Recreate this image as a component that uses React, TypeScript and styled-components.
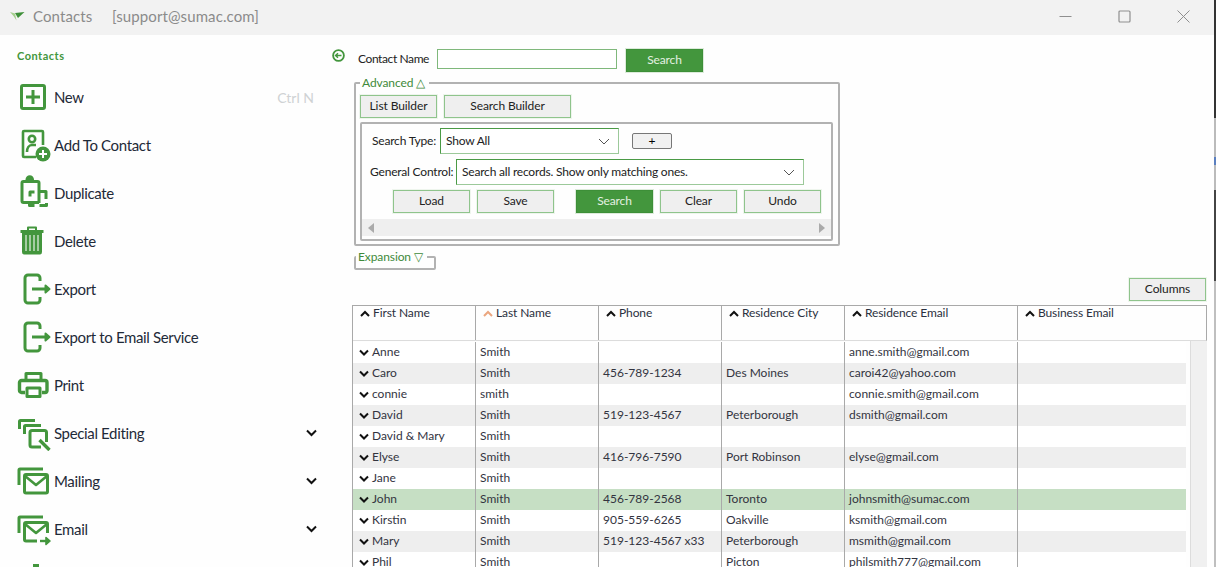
import { createGlobalStyle } from 'styled-components';
import styled from 'styled-components';
import type { ReactNode } from 'react';

const GREEN = '#43963d';

const Global = createGlobalStyle`
  html, body { margin: 0; padding: 0; height: 100%; background: #fefefe; }
  * { box-sizing: border-box; }
  body { font-family: "Lato", "Noto Sans", sans-serif; color: #222; }
`;

const Page = styled.div`
  height: 567px;
  width: 1216px;
  overflow: hidden;
  display: flex;
`;

const Window = styled.div`
  flex: 1;
  min-width: 0;
  display: flex;
  flex-direction: column;
`;

/* sliver of the desktop showing past the window edge */
const DesktopEdge = styled.div`
  flex: 0 0 2px;
  background: linear-gradient(
    #333 0 118px,
    #bbb 118px 157px,
    #5a7fc0 157px 165px,
    #bbb 165px 190px,
    #444 190px 281px,
    #bfbfbf 281px
  );
`;

/* title bar */
const TitleBar = styled.header`
  flex: 0 0 35px;
  background: #f2f2f2;
  display: flex;
  align-items: center;
  padding: 0 0 3px 10px;
  color: #8b8b8b;
  font-size: 15px;
  letter-spacing: 0.1px;
`;
const AppName = styled.span`
  margin-left: 8px;
  width: 79px;
`;
const WinControls = styled.div`
  margin-left: auto;
  display: flex;
  align-items: center;
  padding-right: 24px;
  gap: 46px;
`;

const Body = styled.div`
  flex: 1;
  min-height: 0;
  display: flex;
`;

/* left menu */
const Side = styled.nav`
  flex: 0 0 330px;
  padding-top: 15px;
`;
const SideTitle = styled.div`
  font-size: 11px;
  font-weight: 700;
  letter-spacing: 0.5px;
  color: ${GREEN};
  margin-left: 17px;
  height: 23px;
  line-height: 12px;
`;
const MenuRow = styled.div`
  height: 48px;
  padding-left: 17px;
  padding-right: 13px;
  display: flex;
  align-items: center;
  font-size: 15px;
  letter-spacing: -0.35px;
  color: #1f2a38;
  text-shadow: 0 -21px 0 rgba(0, 0, 0, 0.025);
`;
const MenuIcon = styled.svg`
  flex: 0 0 37px;
  width: 37px;
  height: 36px;
  fill: none;
  stroke: ${GREEN};
  stroke-width: 3;
  stroke-linejoin: round;
`;
const Shortcut = styled.span`
  margin-left: auto;
  margin-right: 3px;
  font-size: 14px;
  letter-spacing: 0;
  color: #cfd2d4;
  text-shadow: none;
`;
const Caret = styled.svg`
  margin-left: auto;
  width: 11px;
  height: 8px;
  fill: none;
  stroke: #111;
  stroke-width: 2;
`;

/* search area */
const Main = styled.main`
  flex: 1;
  min-width: 0;
  padding-top: 14px;
  padding-left: 2px;
  display: flex;
  flex-direction: column;
  font-size: 12px;
`;
const SearchRow = styled.div`
  display: flex;
  align-items: flex-start;
  height: 23px;
  margin-bottom: 4px;
`;
const BackIcon = styled.svg`
  width: 13px;
  height: 13px;
  margin-right: 13px;
  fill: none;
  stroke: ${GREEN};
  stroke-width: 1.8;
`;
const NameLabel = styled.label`
  width: 79px;
  line-height: 20px;
  letter-spacing: -0.4px;
`;
const NameInput = styled.input`
  width: 180px;
  height: 20px;
  border: 1px solid #7fb87b;
  background: #fff;
  margin: 0 9px 0 0;
  padding: 0 4px;
`;
const Btn = styled.button<{ $primary?: boolean; $w?: number }>`
  width: ${(p) => p.$w ?? 77}px;
  height: 23px;
  padding: 0 0 2px;
  font: inherit;
  letter-spacing: -0.1px;
  color: ${(p) => (p.$primary ? '#e4f1e2' : '#222')};
  background: ${(p) => (p.$primary ? GREEN : '#efefef')};
  border: 1px solid ${(p) => (p.$primary ? '#3d8f38' : '#8fc48c')};
  outline: 1px solid ${(p) => (p.$primary ? '#dcebda' : '#eef5ed')};
`;
const Fieldset = styled.fieldset<{ $w: number }>`
  width: ${(p) => p.$w}px;
  margin: 0 0 0 22px;
  padding: 5px 4px 3px;
  border: 2px solid #b2b2b2;
  border-radius: 2px;
  min-width: 0;
`;
const Legend = styled.legend`
  padding: 0 4px 0 2px;
  margin-left: 0;
  color: #3f8a3a;
  line-height: 14px;
  letter-spacing: -0.1px;
`;
const BuilderBar = styled.div`
  display: flex;
  gap: 7px;
  margin-bottom: 4px;
`;
const Inner = styled.div`
  width: 473px;
  height: 119px;
  border: 2px solid #b2b2b2;
  border-radius: 2px;
  padding-top: 4px;
`;
const ControlRow = styled.div<{ $left: number }>`
  display: flex;
  align-items: center;
  padding-left: ${(p) => p.$left}px;
  margin-bottom: 5px;
  letter-spacing: -0.2px;
  white-space: nowrap;
`;
const RowLabel = styled.label<{ $w: number }>`
  width: ${(p) => p.$w}px;
  padding-bottom: 2px;
`;
const Combo = styled.div<{ $w: number }>`
  width: ${(p) => p.$w}px;
  height: 26px;
  padding: 0 8px 2px 5px;
  display: flex;
  align-items: center;
  justify-content: space-between;
  background: #fff;
  border: 1px solid #9cc99a;
  border-left-color: #4a9a45;
  border-top-color: #4a9a45;
`;
const ComboCaret = styled.svg`
  width: 12px;
  height: 7px;
  margin-top: 2px;
  fill: none;
  stroke: #555;
  stroke-width: 1;
`;
const PlusBtn = styled.button`
  width: 40px;
  height: 16px;
  margin-left: 13px;
  padding: 0;
  font: inherit;
  line-height: 12px;
  background: #f1f1f1;
  border: 1px solid #777;
  border-radius: 2px;
`;
const ActionRow = styled.div`
  display: flex;
  gap: 7px;
  padding-left: 31px;
  margin-top: 2px;
`;
const ActionGap = styled.div`
  width: 8px;
`;
const HScroll = styled.div`
  margin-top: 6px;
  height: 17px;
  background: #efefef;
  display: flex;
  align-items: center;
  justify-content: space-between;
  padding: 0 6px;
`;
const Tri = styled.span<{ $dir: 'l' | 'r' }>`
  width: 0;
  height: 0;
  border-top: 5px solid transparent;
  border-bottom: 5px solid transparent;
  ${(p) => (p.$dir === 'l' ? 'border-right: 6px solid #aaa;' : 'border-left: 6px solid #aaa;')}
`;
const ExpansionSet = styled(Fieldset)`
  margin-top: 4px;
  height: 20px;
  padding: 0;
`;
const ColumnsRow = styled.div`
  display: flex;
  justify-content: flex-end;
  padding-right: 8px;
  margin-top: 8px;
  margin-bottom: 4px;
`;

/* table */
const GridTable = styled.div`
  flex: 1;
  min-height: 0;
  width: 855px;
  margin-left: 20px;
  border-left: 1px solid #a9a9a9;
  display: flex;
  flex-direction: column;
  overflow: hidden;
`;
const HeadRow = styled.div`
  flex: 0 0 36px;
  display: grid;
  grid-template-columns: 123px 123px 123px 123px 173px 1fr;
  border-top: 1px solid #a9a9a9;
  border-right: 1px solid #a9a9a9;
  border-bottom: 1px solid #dcdcdc;
`;
const HeadCell = styled.div`
  padding: 0 0 0 7px;
  display: flex;
  align-items: flex-start;
  gap: 3px;
  line-height: 13px;
  color: #2b3040;
  letter-spacing: -0.1px;
  border-right: 1px solid #a9a9a9;
  &:last-child { border-right: 0; }
`;
const SortIcon = styled.svg<{ $active?: boolean }>`
  width: 10px;
  height: 7px;
  margin-top: 4px;
  fill: none;
  stroke: ${(p) => (p.$active ? '#eba67f' : '#111')};
  stroke-width: 2;
`;
const BodyWrap = styled.div`
  flex: 1;
  min-height: 0;
  display: flex;
  padding-top: 1px;
`;
const Rows = styled.div`
  flex: 0 0 833px;
`;
const Row = styled.div<{ $tone: 'plain' | 'alt' | 'sel' }>`
  height: 21px;
  display: grid;
  grid-template-columns: 123px 123px 123px 123px 173px 1fr;
  background: ${(p) => (p.$tone === 'sel' ? '#c6dfc4' : p.$tone === 'alt' ? '#eeeeee' : '#fff')};
`;
const Cell = styled.div`
  padding-left: 4px;
  padding-bottom: 2px;
  line-height: 19px;
  white-space: nowrap;
  color: #33343f;
  border-right: 1px solid #a9a9a9;
  &:last-child { border-right: 0; }
`;
const FirstCell = styled(Cell)`
  padding-left: 6px;
  display: flex;
  align-items: center;
  gap: 3px;
`;
const RowCaret = styled.svg`
  width: 10px;
  height: 7px;
  margin-top: 2px;
  fill: none;
  stroke: #111;
  stroke-width: 2;
`;
const VTrack = styled.div`
  flex: 0 0 17px;
  margin-left: 4px;
  margin-top: -1px;
  background: #f0f0f0;
  border-left: 1px solid #dcdcdc;
`;

const up = <path d="M1 6 L5 2 L9 6" />;
const down = <path d="M1 1.5 L5 5.5 L9 1.5" />;

type Item = { label: string; icon: ReactNode; shortcut?: string };

const exportIcon = (
  <>
    <path d="M23 10 V7 a3 3 0 0 0 -3 -3 H11 a3 3 0 0 0 -3 3 V29 a3 3 0 0 0 3 3 H20 a3 3 0 0 0 3 -3 V26" />
    <path d="M15 18 H29" />
    <path d="M28.5 14.5 L32.5 18 L28.5 21.5 Z" fill={GREEN} strokeWidth="2" />
  </>
);

const menu: Item[] = [
  {
    label: 'New',
    shortcut: 'Ctrl N',
    icon: (
      <>
        <rect x="4.5" y="6.5" width="23" height="23" rx="1.5" />
        <path d="M16 11 V25 M9 18 H23" />
      </>
    ),
  },
  {
    label: 'Add To Contact',
    icon: (
      <>
        <path d="M19 30 H7 a1 1 0 0 1 -1 -1 V5 a1 1 0 0 1 1 -1 H25 a1 1 0 0 1 1 1 V18" strokeWidth="2.6" />
        <circle cx="15" cy="12" r="3.2" strokeWidth="2.6" />
        <path d="M10 25 c0 -4 2 -7 5 -7 h4" strokeWidth="2.6" />
        <circle cx="26" cy="27" r="7.5" fill={GREEN} stroke="none" />
        <path d="M26 23 V31 M22 27 H30" stroke="#fff" strokeWidth="2" />
      </>
    ),
  },
  {
    label: 'Duplicate',
    icon: (
      <>
        <path d="M22 28 V8 a1.5 1.5 0 0 0 -1.5 -1.5 H6.5 A1.5 1.5 0 0 0 5 8 V26 a1.5 1.5 0 0 0 1.5 1.5 H22" />
        <path d="M9.5 6 V4.5 a3 3 0 0 1 6.5 0 V6" fill={GREEN} strokeWidth="2" />
        <path d="M13 21.5 V17 H17.5" />
        <path d="M22 16.5 H29 V24" />
        <path d="M12.5 27 V30.5 H17.5 M22.5 30.5 H29.5 V28" />
      </>
    ),
  },
  {
    label: 'Delete',
    icon: (
      <>
        <path d="M3.5 8.5 H26.5" />
        <path d="M11 7 V4.5 H19 V7" strokeWidth="2" />
        <path d="M5.5 9 H24.5 V29.5 a1.5 1.5 0 0 1 -1.5 1.5 H7 A1.5 1.5 0 0 1 5.5 29.5 Z" fill={GREEN} stroke={GREEN} strokeWidth="1" />
        <path d="M9 12 V28 M13 12 V28 M17 12 V28 M21 12 V28" stroke="#cfe3cd" strokeWidth="1.4" />
      </>
    ),
  },
  { label: 'Export', icon: exportIcon },
  { label: 'Export to Email Service', icon: exportIcon },
  {
    label: 'Print',
    icon: (
      <>
        <path d="M9 13 V6.5 H24 V13" />
        <path d="M8 25.5 H4.5 a2 2 0 0 1 -2 -2 V15.5 a2 2 0 0 1 2 -2 H28 a2 2 0 0 1 2 2 V23.5 a2 2 0 0 1 -2 2 H25" strokeWidth="3.4" />
        <path d="M10 21 H23 V29.5 H10 Z" />
        <circle cx="26.5" cy="17.5" r="1.5" fill="#fff" stroke="none" />
      </>
    ),
  },
  {
    label: 'Special Editing',
    icon: (
      <>
        <path d="M2.5 14 V6.5 a1 1 0 0 1 1 -1 H18" />
        <path d="M7.5 19 V11.5 a1 1 0 0 1 1 -1 H24" />
        <path d="M24 32 H15 a2 2 0 0 1 -2 -2 V17.5 a2 2 0 0 1 2 -2 H27.5 a2 2 0 0 1 2 2 V27" />
        <path d="M22.5 25 L32.5 35" strokeWidth="3.4" />
      </>
    ),
  },
  {
    label: 'Mailing',
    icon: (
      <>
        <path d="M2 22 V7 a1 1 0 0 1 1 -1 H26" />
        <rect x="7.5" y="11.5" width="23" height="18.5" rx="1.5" />
        <path d="M8 13 L19 22 L30 13" strokeWidth="2.6" />
      </>
    ),
  },
  {
    label: 'Email',
    icon: (
      <>
        <path d="M2 22 V7 a1 1 0 0 1 1 -1 H26" />
        <path d="M20 30 H9 a1.5 1.5 0 0 1 -1.5 -1.5 V13 a1.5 1.5 0 0 1 1.5 -1.5 H29 a1.5 1.5 0 0 1 1.5 1.5 V22" />
        <path d="M8 13 L19 22 L30 13" strokeWidth="2.6" />
        <path d="M23 30 H30" strokeWidth="2.4" />
        <path d="M29 26.5 L33 30 L29 33.5 Z" fill={GREEN} strokeWidth="1.6" />
      </>
    ),
  },
  {
    label: 'Analyze & Report',
    icon: <path d="M19 5 V14" strokeWidth="6" />,
  },
];

const withCaret = ['Special Editing', 'Mailing', 'Email'];

const heads = ['First Name', 'Last Name', 'Phone', 'Residence City', 'Residence Email', 'Business Email'];

const people = [
  ['Anne', 'Smith', '', '', 'anne.smith@gmail.com'],
  ['Caro', 'Smith', '456-789-1234', 'Des Moines', 'caroi42@yahoo.com'],
  ['connie', 'smith', '', '', 'connie.smith@gmail.com'],
  ['David', 'Smith', '519-123-4567', 'Peterborough', 'dsmith@gmail.com'],
  ['David & Mary', 'Smith', '', '', ''],
  ['Elyse', 'Smith', '416-796-7590', 'Port Robinson', 'elyse@gmail.com'],
  ['Jane', 'Smith', '', '', ''],
  ['John', 'Smith', '456-789-2568', 'Toronto', 'johnsmith@sumac.com'],
  ['Kirstin', 'Smith', '905-559-6265', 'Oakville', 'ksmith@gmail.com'],
  ['Mary', 'Smith', '519-123-4567 x33', 'Peterborough', 'msmith@gmail.com'],
  ['Phil', 'Smith', '', 'Picton', 'philsmith777@gmail.com'],
];

export default function App() {
  return (
    <Page>
      <Global />
      <Window>
        <TitleBar>
          <svg width="15" height="11" viewBox="0 0 15 11">
            <path d="M0 1 L5 2.5 L6.5 9.5 L3.5 5 Z" fill="#a5d08c" />
            <path d="M5 2 L14.5 1 L8 7 Z" fill="#3d8f38" />
          </svg>
          <AppName>Contacts</AppName>
          <span>[support@sumac.com]</span>
          <WinControls>
            <svg width="13" height="13" viewBox="0 0 13 13" stroke="#8f8f8f" fill="none">
              <path d="M0.5 6.5 H12.5" />
            </svg>
            <svg width="13" height="13" viewBox="0 0 13 13" stroke="#8f8f8f" fill="none">
              <rect x="1" y="1" width="11" height="11" rx="1" strokeWidth="1.2" />
            </svg>
            <svg width="13" height="13" viewBox="0 0 13 13" stroke="#8f8f8f" fill="none">
              <path d="M0.5 0.5 L12.5 12.5 M12.5 0.5 L0.5 12.5" />
            </svg>
          </WinControls>
        </TitleBar>
        <Body>
          <Side>
            <SideTitle>Contacts</SideTitle>
            {menu.map((m) => (
              <MenuRow key={m.label}>
                <MenuIcon viewBox="0 0 37 36">{m.icon}</MenuIcon>
                <span>{m.label}</span>
                {m.shortcut && <Shortcut>{m.shortcut}</Shortcut>}
                {withCaret.includes(m.label) && (
                  <Caret viewBox="0 0 11 8">
                    <path d="M1 1.5 L5.5 6 L10 1.5" />
                  </Caret>
                )}
              </MenuRow>
            ))}
          </Side>
          <Main>
            <SearchRow>
              <BackIcon viewBox="0 0 13 13">
                <circle cx="6.5" cy="6.5" r="5.4" />
                <path d="M3.5 6.5 H9.5 M6 4.2 L3.5 6.5 L6 8.8" strokeWidth="1.4" />
              </BackIcon>
              <NameLabel>Contact Name</NameLabel>
              <NameInput />
              <Btn $primary>Search</Btn>
            </SearchRow>
            <Fieldset $w={486}>
              <Legend>Advanced △</Legend>
              <BuilderBar>
                <Btn>List Builder</Btn>
                <Btn $w={127}>Search Builder</Btn>
              </BuilderBar>
              <Inner>
                <ControlRow $left={10}>
                  <RowLabel $w={68}>Search Type:</RowLabel>
                  <Combo $w={179}>
                    Show All
                    <ComboCaret viewBox="0 0 12 7">
                      <path d="M1 1 L6 6 L11 1" />
                    </ComboCaret>
                  </Combo>
                  <PlusBtn>+</PlusBtn>
                </ControlRow>
                <ControlRow $left={8}>
                  <RowLabel $w={86}>General Control:</RowLabel>
                  <Combo $w={348}>
                    Search all records. Show only matching ones.
                    <ComboCaret viewBox="0 0 12 7">
                      <path d="M1 1 L6 6 L11 1" />
                    </ComboCaret>
                  </Combo>
                </ControlRow>
                <ActionRow>
                  <Btn>Load</Btn>
                  <Btn>Save</Btn>
                  <ActionGap />
                  <Btn $primary>Search</Btn>
                  <Btn>Clear</Btn>
                  <Btn>Undo</Btn>
                </ActionRow>
                <HScroll>
                  <Tri $dir="l" />
                  <Tri $dir="r" />
                </HScroll>
              </Inner>
            </Fieldset>
            <ExpansionSet $w={82}>
              <Legend>Expansion ▽</Legend>
            </ExpansionSet>
            <ColumnsRow>
              <Btn>Columns</Btn>
            </ColumnsRow>
            <GridTable>
              <HeadRow>
                {heads.map((h) => (
                  <HeadCell key={h}>
                    <SortIcon viewBox="0 0 10 7" $active={h === 'Last Name'}>
                      {up}
                    </SortIcon>
                    {h}
                  </HeadCell>
                ))}
              </HeadRow>
              <BodyWrap>
                <Rows>
                  {people.map((p, i) => (
                    <Row key={p[0]} $tone={p[0] === 'John' ? 'sel' : i % 2 ? 'alt' : 'plain'}>
                      <FirstCell>
                        <RowCaret viewBox="0 0 10 7">{down}</RowCaret>
                        {p[0]}
                      </FirstCell>
                      <Cell>{p[1]}</Cell>
                      <Cell>{p[2]}</Cell>
                      <Cell>{p[3]}</Cell>
                      <Cell>{p[4]}</Cell>
                      <Cell />
                    </Row>
                  ))}
                </Rows>
                <VTrack />
              </BodyWrap>
            </GridTable>
          </Main>
        </Body>
      </Window>
      <DesktopEdge />
    </Page>
  );
}
